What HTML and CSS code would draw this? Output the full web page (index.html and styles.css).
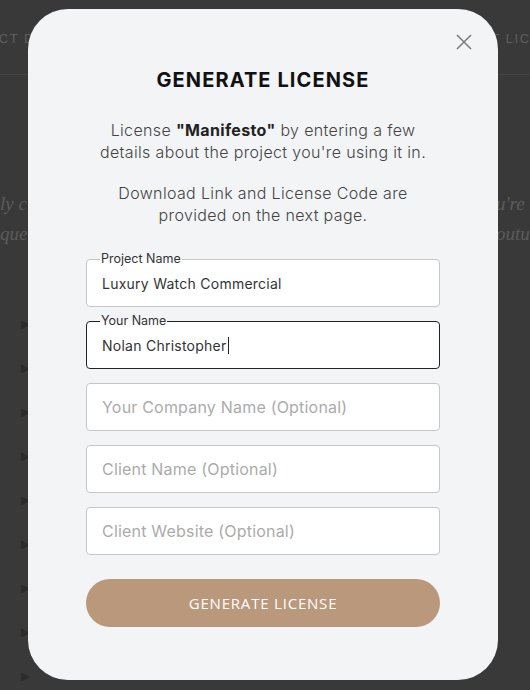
FILE: index.html
```html
<!DOCTYPE html>
<html lang="en">
<head>
<meta charset="utf-8">
<title>Generate License</title>
<link rel="stylesheet" href="styles.css">
</head>
<body>
<div class="page">
  <header class="bg-header">
    <span class="bg-nav bg-nav-left">PROJECT DETAILS</span>
    <span class="bg-nav bg-nav-right">GET LICENSE</span>
  </header>
  <div class="bg-text">
    <div class="bg-line"><span class="bg-frag-left">ly clear</span><span class="bg-frag-right">u're using</span></div>
    <div class="bg-line"><span class="bg-frag-left">que Lic</span><span class="bg-frag-right">outube</span></div>
  </div>
  <ul class="bg-list">
    <li>▶</li><li>▶</li><li>▶</li><li>▶</li><li>▶</li><li>▶</li><li>▶</li><li>▶</li><li>▶</li>
  </ul>
</div>

<div class="overlay">
  <div class="modal">
    <button class="close" aria-label="Close">
      <svg width="16" height="16" viewBox="0 0 16 16"><path d="M1 1L15 15M15 1L1 15" stroke="#7a7a7a" stroke-width="1.5" fill="none"/></svg>
    </button>
    <h1 class="title">GENERATE LICENSE</h1>
    <p class="intro">License <strong>"Manifesto"</strong> by entering a few<br>details about the project you're using it in.</p>
    <p class="intro second">Download Link and License Code are<br>provided on the next page.</p>
    <form class="form">
      <div class="field filled">
        <span class="legend">Project Name</span>
        <div class="value">Luxury Watch Commercial</div>
      </div>
      <div class="field filled focused">
        <span class="legend">Your Name</span>
        <div class="value">Nolan Christopher<span class="caret"></span></div>
      </div>
      <div class="field"><div class="placeholder">Your Company Name (Optional)</div></div>
      <div class="field"><div class="placeholder">Client Name (Optional)</div></div>
      <div class="field"><div class="placeholder">Client Website (Optional)</div></div>
      <button type="button" class="submit">GENERATE LICENSE</button>
    </form>
  </div>
</div>
</body>
</html>
```

FILE: styles.css
```css
* { box-sizing: border-box; }
html, body { margin: 0; padding: 0; }
body {
  width: 530px;
  height: 690px;
  overflow: hidden;
  background: #393939;
  font-family: "Inter", "Liberation Sans", sans-serif;
}

/* background page */
.page { width: 530px; height: 690px; overflow: hidden; }
.bg-header {
  height: 75px;
  border-bottom: 1px solid #434343;
  display: flex;
  justify-content: space-between;
  align-items: center;
  padding-top: 2px;
  overflow: hidden;
  white-space: nowrap;
}
.bg-nav {
  font-family: "Liberation Sans", sans-serif;
  font-size: 13px;
  letter-spacing: 1.5px;
  color: #5e5e5e;
}
.bg-nav-left { margin-left: -52px; }
.bg-nav-right { margin-right: -42px; }
.bg-text { padding-top: 118px; }
.bg-line {
  height: 30px;
  display: flex;
  justify-content: space-between;
  font-family: "Liberation Serif", serif;
  font-style: italic;
  font-size: 19px;
  color: #5c5c5c;
  white-space: nowrap;
}
.bg-frag-left { width: 40px; overflow: hidden; }
.bg-frag-right { width: 34px; overflow: hidden; }
.bg-list {
  list-style: none;
  margin: 0;
  padding: 64px 0 0 21px;
}
.bg-list li {
  height: 44px;
  font-size: 12px;
  color: #2b2b2b;
  font-family: "DejaVu Sans", sans-serif;
}

/* overlay + modal */
.overlay {
  position: fixed;
  inset: 0;
  display: flex;
  justify-content: center;
  align-items: flex-start;
  padding: 9px 4px 0 0;
}
.modal {
  position: relative;
  width: 470px;
  height: 671px;
  background: #f3f4f6;
  border-radius: 40px;
  padding: 59px 58px 0;
  display: flex;
  flex-direction: column;
  align-items: stretch;
}
.close {
  position: absolute;
  top: 25px;
  right: 26px;
  width: 16px;
  height: 16px;
  padding: 0;
  border: 0;
  background: none;
  line-height: 0;
}
.title {
  margin: 0;
  text-align: center;
  font-size: 20px;
  line-height: 24px;
  font-weight: 700;
  letter-spacing: 1.1px;
  color: #111;
}
.intro {
  margin: 28px -10px 0;
  text-align: center;
  font-size: 16px;
  line-height: 21.5px;
  font-weight: 300;
  letter-spacing: 0.35px;
  color: #444;
  white-space: nowrap;
}
.intro strong { font-weight: 700; color: #222; }
.intro.second { margin-top: 20px; letter-spacing: 0.35px; }

.form {
  margin-top: 33px;
  display: flex;
  flex-direction: column;
  gap: 14px;
}
.field {
  position: relative;
  height: 48px;
  background: #fff;
  border: 1px solid #c6c6c6;
  border-radius: 4px;
  display: flex;
  align-items: center;
  padding-left: 15px;
}
.field.focused { border-color: #222; }
.legend {
  position: absolute;
  top: -8px;
  left: 13px;
  padding: 0 1px;
  font-size: 12.5px;
  line-height: 14px;
  color: #333;
  background: linear-gradient(#f3f4f6 50%, #fff 50%);
}
.value {
  font-size: 14px;
  letter-spacing: 0.25px;
  color: #333;
  display: flex;
  align-items: center;
}
.caret {
  display: inline-block;
  width: 1px;
  height: 17px;
  background: #222;
  margin-left: 1px;
}
.placeholder {
  font-size: 16px;
  letter-spacing: 0.2px;
  color: #ababab;
  font-weight: 400;
}
.submit {
  margin-top: 10px;
  height: 48px;
  border: 0;
  border-radius: 24px;
  background: #b9987b;
  color: #fff;
  font-family: "Open Sans", "Liberation Sans", sans-serif;
  font-size: 15px;
  letter-spacing: 0.8px;
  font-weight: 400;
}
```
